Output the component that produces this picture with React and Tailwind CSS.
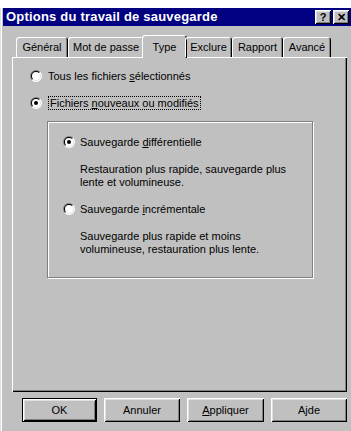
import React from "react";

const raised =
  "shadow-[inset_1px_1px_#ffffff,inset_-1px_-1px_#000000,inset_2px_2px_#dfdfdf,inset_-2px_-2px_#808080]";

const Radio = ({ checked }) => (
  <svg width="12" height="12" viewBox="0 0 12 12" className="shrink-0">
    <path d="M1.757 10.243A6 6 0 0 1 10.243 1.757Z" fill="#808080" />
    <path d="M1.757 10.243A6 6 0 0 0 10.243 1.757Z" fill="#ffffff" />
    <path d="M2.464 9.536A5 5 0 0 1 9.536 2.464Z" fill="#000000" />
    <path d="M2.464 9.536A5 5 0 0 0 9.536 2.464Z" fill="#dfdfdf" />
    <circle cx="6" cy="6" r="4" fill="#ffffff" />
    {checked && <circle cx="6" cy="6" r="2" fill="#000000" />}
  </svg>
);

const RadioRow = ({ checked, focus, gap = "gap-[6px]", children }) => (
  <div className={`flex items-center h-[16px] ${gap}`}>
    <Radio checked={checked} />
    <span className={focus ? "border border-dotted border-black px-px leading-[12px]" : "leading-[14px]"}>
      {children}
    </span>
  </div>
);

const tabs = [
  { label: "Général", w: "w-[52px]" },
  { label: "Mot de passe", w: "w-[76px]" },
  { label: "Type", w: "w-[45px]", active: true },
  { label: "Exclure", w: "w-[47px]" },
  { label: "Rapport", w: "w-[51px]" },
  { label: "Avancé", w: "w-[48px]" },
];

const Button = ({ w, isDefault, children }) => (
  <button
    className={`h-[24px] ${w} bg-[#c0c0c0] text-black ${
      isDefault ? "border border-black" : ""
    }`}
  >
    <span className={`flex h-full w-full items-center justify-center ${raised}`}>{children}</span>
  </button>
);

export default function App() {
  return (
    <div className="w-[351px] h-[431px] overflow-hidden bg-white pt-2 font-['Liberation_Sans',Arial,sans-serif] text-[11px] text-black">
      <div className="w-[360px] h-[423px] bg-[#c0c0c0] pl-[3px] shadow-[inset_1px_0_#dfdfdf,inset_2px_0_#ffffff]">
        {/* Title bar */}
        <div className="h-[18px] bg-[#000080] flex items-center pl-[3px]">
          <span className="flex-1 text-white font-bold text-[13px] tracking-[0.2px]">
            Options du travail de sauvegarde
          </span>
          <div className="flex gap-[2px] mr-[11px]">
            <div className={`w-[16px] h-[14px] bg-[#c0c0c0] flex items-center justify-center font-bold text-[11px] ${raised}`}>
              ?
            </div>
            <div className={`w-[16px] h-[14px] bg-[#c0c0c0] flex items-center justify-center font-bold text-[11px] ${raised}`}>
              ✕
            </div>
          </div>
        </div>

        {/* Tabs */}
        <div className="ml-[11px] mt-[8px] flex items-end h-[23px] pl-[2px] relative z-10">
          {tabs.map((t) =>
            t.active ? (
              <div
                key={t.label}
                className={`${t.w} -mx-[2px] h-[23px] px-[2px] bg-[#c0c0c0] rounded-t-[3px] shadow-[inset_1px_1px_#ffffff,inset_-1px_0_#000000,inset_-2px_0_#808080] flex items-start justify-center pt-[4px] -mb-px`}
              >
                {t.label}
              </div>
            ) : (
              <div
                key={t.label}
                className={`${t.w} h-[20px] rounded-t-[3px] shadow-[inset_1px_1px_#ffffff,inset_-1px_0_#000000,inset_-2px_0_#808080] flex items-center justify-center`}
              >
                {t.label}
              </div>
            )
          )}
        </div>

        {/* Panel */}
        <div className="ml-[9px] w-[335px] h-[335px] shadow-[inset_1px_1px_#ffffff,inset_-1px_-1px_#000000,inset_-2px_-2px_#808080] pl-[18px] pt-[11px]">
          <RadioRow>
            Tous les fichiers <u>s</u>électionnés
          </RadioRow>
          <div className="mt-[11px]">
            <RadioRow checked focus>
              Fichiers <u>n</u>ouveaux ou modifiés
            </RadioRow>
          </div>

          {/* Group box */}
          <div className="ml-[17px] mt-[10px] w-[266px] h-[157px] border border-[#808080] shadow-[inset_1px_1px_#ffffff,1px_1px_#ffffff] pl-[15px] pt-[12px]">
            <RadioRow checked gap="gap-[5px]">
              Sauvegarde <u>d</u>ifférentielle
            </RadioRow>
            <p className="ml-[17px] mt-[13px] leading-[13px]">
              Restauration plus rapide, sauvegarde plus
              <br />
              lente et volumineuse.
            </p>
            <div className="mt-[12px]">
              <RadioRow gap="gap-[5px]">
                Sauvegarde <u>i</u>ncrémentale
              </RadioRow>
            </div>
            <p className="ml-[17px] mt-[13px] leading-[13px]">
              Sauvegarde plus rapide et moins
              <br />
              volumineuse, restauration plus lente.
            </p>
          </div>
        </div>

        {/* Buttons */}
        <div className="flex ml-[19px] mt-[6px] gap-[7px]">
          <Button w="w-[75px]" isDefault>
            OK
          </Button>
          <Button w="w-[76px]">Annuler</Button>
          <Button w="w-[77px]">
            <span>
              <u>A</u>ppliquer
            </span>
          </Button>
          <Button w="w-[76px]">
            <span>
              A<u>j</u>de
            </span>
          </Button>
        </div>
      </div>
    </div>
  );
}
